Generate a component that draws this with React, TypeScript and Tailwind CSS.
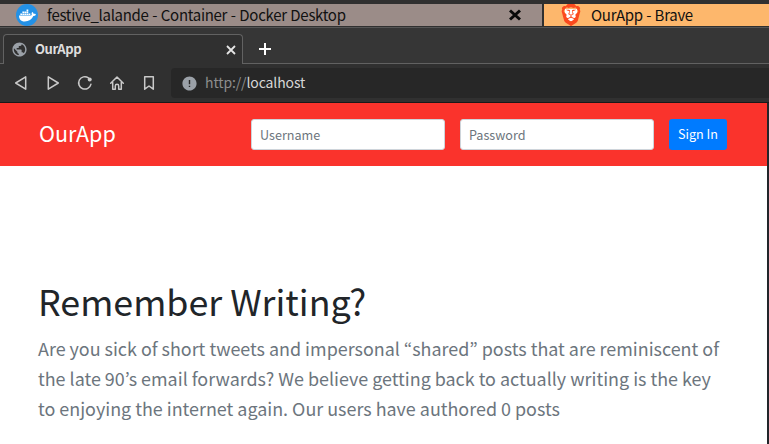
import React from "react";
import { FaDocker } from "react-icons/fa";
import { SiBrave } from "react-icons/si";
import { MdPublic, MdError } from "react-icons/md";

const stroke = { fill: "none", stroke: "#c9c9c9", strokeWidth: 1.5, strokeLinejoin: "round", strokeLinecap: "round" } as const;

function Icon({ children }: { children: React.ReactNode }) {
  return (
    <svg width="16" height="16" viewBox="0 0 16 16" {...stroke}>
      {children}
    </svg>
  );
}

function TaskBar() {
  return (
    <div className="flex h-[22px] shrink-0 gap-[2px] text-[15px] leading-[21px] text-[#111]">
      <div className="flex w-[542px] items-center bg-[#9b8c88] pl-4">
        <span className="flex size-[22px] items-center justify-center rounded-full bg-[#2391e6]">
          <FaDocker size={17} color="#fff" />
        </span>
        <span className="ml-[9px] pb-px tracking-[-0.3px] [word-spacing:0.6px] whitespace-pre">festive_lalande - Container - Docker Desktop</span>
        <svg className="mr-[21px] ml-auto" width="12" height="12" viewBox="0 0 12 12" stroke="#0a0a0a" strokeWidth="3">
          <path d="M1 1.5 11 10.5M11 1.5 1 10.5" />
        </svg>
      </div>
      <div className="flex flex-1 items-center bg-[#fdb76c] pl-4">
        <span className="relative flex size-[22px] items-center justify-center">
          <span className="absolute h-3 w-3 bg-white" />
          <SiBrave className="relative" size={22} color="#fb4a1e" />
        </span>
        <span className="ml-[9px] pb-px tracking-[-0.3px] [word-spacing:0.4px]">OurApp - Brave</span>
      </div>
    </div>
  );
}

function TabStrip() {
  return (
    <div className="flex h-[37px] shrink-0 items-end border-t border-[#555] bg-[#363636]">
      <div className="h-px w-[3px] bg-[#626262]" />
      <div className="flex h-[30px] w-[240px] items-center rounded-t-[4px] border border-b-0 border-[#626262] bg-[#303030] pr-[6px] pl-[7px]">
        <MdPublic size={17} color="#9ba1a8" />
        <span className="ml-[7px] pb-[2px] text-[13px] font-bold tracking-[-0.45px] text-[#dedede]">OurApp</span>
        <svg className="ml-auto" width="10" height="10" viewBox="0 0 10 10" stroke="#e5e5e5" strokeWidth="1.8">
          <path d="M1 1 9 9M9 1 1 9" />
        </svg>
      </div>
      <div className="flex h-[30px] flex-1 items-center border-b border-[#626262] pl-4">
        <svg width="12" height="12" viewBox="0 0 12 12" stroke="#fff" strokeWidth="2">
          <path d="M6 0v12M0 6h12" />
        </svg>
      </div>
    </div>
  );
}

function Toolbar() {
  return (
    <div className="flex h-[39px] shrink-0 items-center border-b border-[#191919] bg-[#303030] pl-[13px]">
      <div className="flex gap-4">
        <Icon><path d="M12.7 1.8v12.4L2.7 8z" /></Icon>
        <Icon><path d="M3.3 1.8v12.4L13.3 8z" /></Icon>
        <Icon>
          <path d="M13.9 9.3A6.2 6.2 0 1 1 11.4 2.8" />
          <circle cx="12.7" cy="4.6" r="2" fill="#c9c9c9" stroke="none" />
        </Icon>
        <Icon><path d="M1.7 8.3 8 2 14.3 8.3M3.7 7.5v6.7h2.6v-3.3a1.7 1.7 0 0 1 3.4 0v3.3h2.6V7.5" /></Icon>
        <Icon><path d="M3.7 1.8h8.6v12.4L8 11 3.7 14.2z" /></Icon>
      </div>
      <div className="ml-[14px] flex h-[30px] flex-1 items-center rounded-l-[4px] bg-[#272727] pl-[10px]">
        <MdError size={17} color="#9ba1a8" />
        <span className="ml-[7px] pb-[2px] text-[14px] tracking-[-0.12px] text-[#8d8d8d]">http://<span className="text-[#d6d6d6]">localhost</span></span>
      </div>
    </div>
  );
}

export default function App() {
  return (
    <div lang="en" className="flex h-[444px] w-[769px] flex-col overflow-hidden bg-[#303030] pt-1 font-['Noto_Sans_CJK_KR',sans-serif]">
      <TaskBar />
      <div className="h-px shrink-0 bg-[#303030]" />
      <TabStrip />
      <Toolbar />
      <main className="flex-1 border-r-2 border-[#22252a] bg-white">
        <header className="flex h-[63px] items-center bg-[#fa332c] pr-10 pl-[39px]">
          <span className="pb-[3px] text-[21.5px] leading-[30px] text-white">OurApp</span>
          <form className="ml-auto flex gap-[15px] text-[12.6px]">
            <input placeholder="Username" className="h-[31px] w-[194px] rounded-[3px] border border-[#ced4da] bg-white px-2 placeholder:text-[#6c757d]" />
            <input placeholder="Password" className="h-[31px] w-[194px] rounded-[3px] border border-[#ced4da] bg-white px-2 placeholder:text-[#6c757d]" />
            <button type="button" className="h-[31px] w-[58px] rounded-[3px] bg-[#007bff] text-white">Sign In</button>
          </form>
        </header>
        <section className="pt-[110px] pl-[38px]">
          <h1 className="text-[35.8px] leading-[48px] text-[#212529]">Remember Writing?</h1>
          <p className="mt-[9px] text-[17.92px] leading-[30px] whitespace-nowrap text-[#6c757d]">
            Are you sick of short tweets and impersonal “shared” posts that are reminiscent of<br />
            the late 90’s email forwards? We believe getting back to actually writing is the key<br />
            to enjoying the internet again. Our users have authored 0 posts
          </p>
        </section>
      </main>
    </div>
  );
}
